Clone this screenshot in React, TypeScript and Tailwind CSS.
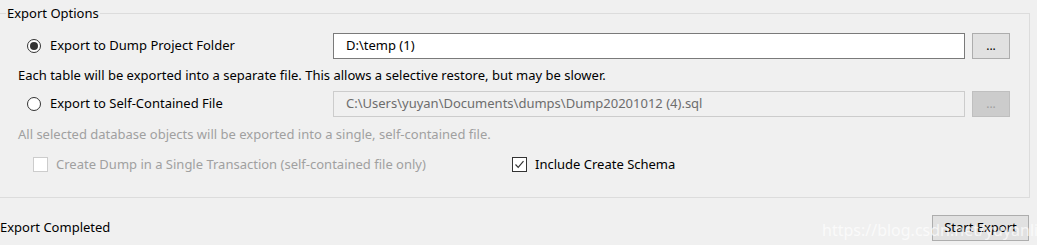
import React from "react";

const font = { fontFamily: '"Segoe UI", "Noto Sans", "Liberation Sans", sans-serif' };

const Radio = ({ checked, label }: { checked: boolean; label: string }) => (
  <label className="flex items-center gap-[9px] text-[13px] text-black">
    <span className="w-[14px] h-[14px] rounded-full border border-[#333] bg-white flex items-center justify-center">
      {checked && <span className="w-[8px] h-[8px] rounded-full bg-[#333]" />}
    </span>
    {label}
  </label>
);

const Check = ({ checked, disabled, label }: { checked: boolean; disabled?: boolean; label: string }) => (
  <label
    className={`flex items-center gap-[8px] text-[13px] leading-[20px] ${disabled ? "text-[#a0a0a0]" : "text-black"}`}
  >
    <span
      className={`w-[15px] h-[15px] border flex items-center justify-center bg-white ${
        disabled ? "border-[#cccccc]" : "border-[#333]"
      }`}
    >
      {checked && (
        <svg width="11" height="11" viewBox="0 0 11 11">
          <path d="M1.5 5.5 L4.2 8.3 L9.5 2.2" fill="none" stroke="#333" strokeWidth="1.2" />
        </svg>
      )}
    </span>
    {label}
  </label>
);

const PathRow = ({ value, disabled }: { value: string; disabled?: boolean }) => (
  <div className="flex items-center gap-[7px]">
    <div
      className={`w-[632px] h-[26px] flex items-center px-[12px] text-[13px] border ${
        disabled ? "bg-[#f0f0f0] border-[#cccccc] text-[#6d6d6d]" : "bg-white border-[#7a7a7a] text-black"
      }`}
    >
      {value}
    </div>
    <button
      className={`w-[38px] h-[26px] border text-[12px] leading-none ${
        disabled ? "bg-[#cccccc] border-[#bfbfbf] text-[#a0a0a0]" : "bg-[#e1e1e1] border-[#adadad] text-black"
      }`}
    >
      ...
    </button>
  </div>
);

export default function App() {
  return (
    <div className="relative w-[1037px] h-[245px] bg-[#f0f0f0] overflow-hidden" style={font}>
      <fieldset className="ml-[-1px] w-[1031px] h-[192px] mt-[6px] border border-[#dcdcdc] px-0 pt-0 relative">
        <legend className="ml-[6px] px-[1px] text-[13px] text-black leading-[14px]">Export Options</legend>
        <div className="flex flex-col">
          <div className="flex items-center justify-between pl-[27px] pr-[19px] mt-[13px]">
            <Radio checked label="Export to Dump Project Folder" />
            <PathRow value="D:\temp (1)" />
          </div>
          <div className="pl-[18px] mt-[6px] text-[13px] text-black leading-[20px]">
            Each table will be exported into a separate file. This allows a selective restore, but may be slower.
          </div>
          <div className="flex items-center justify-between pl-[27px] pr-[19px] mt-[6px]">
            <Radio checked={false} label="Export to Self-Contained File" />
            <PathRow value="C:\Users\yuyan\Documents\dumps\Dump20201012 (4).sql" disabled />
          </div>
          <div className="pl-[18px] mt-[7px] text-[13px] text-[#a0a0a0] leading-[20px]">
            All selected database objects will be exported into a single, self-contained file.
          </div>
          <div className="flex items-center mt-[10px] pl-[33px]">
            <div className="w-[479px]">
              <Check checked={false} disabled label="Create Dump in a Single Transaction (self-contained file only)" />
            </div>
            <Check checked label="Include Create Schema" />
          </div>
        </div>
      </fieldset>
      <div className="flex items-center justify-between mt-[17px] pr-[8px]">
        <span className="text-[13px] text-black">Export Completed</span>
        <button className="w-[97px] h-[26px] bg-[#e1e1e1] border border-[#adadad] text-[13px] text-black">
          Start Export
        </button>
      </div>
      <span className="absolute left-[822px] top-[218px] text-[16px] text-white/70 pointer-events-none">
        https://blog.csdn.net/yuyanlite
      </span>
    </div>
  );
}
